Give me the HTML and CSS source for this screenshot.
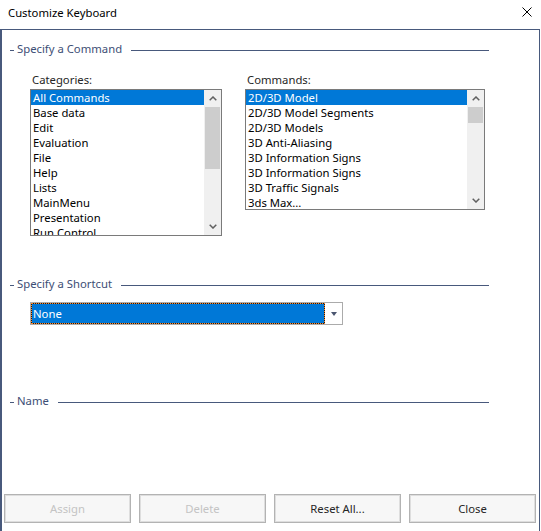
FILE: index.html
```html
<!DOCTYPE html>
<html>
<head>
<meta charset="utf-8">
<link rel="stylesheet" href="styles.css">
</head>
<body>
<div class="titlebar">
  <span class="title">Customize Keyboard</span>
  <svg class="close" width="10" height="10" viewBox="0 0 10 10"><path d="M0.5 0.5 L9.5 9.5 M9.5 0.5 L0.5 9.5" stroke="#000" stroke-width="1" fill="none"/></svg>
</div>
<div class="frame">
  <div class="group-head first"><span class="dash"></span><span class="gtext">Specify a Command</span><span class="gline"></span></div>
  <div class="lists">
    <div class="col">
      <div class="label">Categories:</div>
      <div class="listbox cat">
        <div class="items">
          <div class="item sel">All Commands</div>
          <div class="item">Base data</div>
          <div class="item">Edit</div>
          <div class="item">Evaluation</div>
          <div class="item">File</div>
          <div class="item">Help</div>
          <div class="item">Lists</div>
          <div class="item">MainMenu</div>
          <div class="item">Presentation</div>
          <div class="item">Run Control</div>
        </div>
        <div class="sbar">
          <div class="arrow"><svg width="8" height="5" viewBox="0 0 8 5"><path d="M0.7 4.3 L4 1 L7.3 4.3" stroke="#606060" stroke-width="1.5" fill="none"/></svg></div>
          <div class="track"><div class="thumb cat-thumb"></div></div>
          <div class="arrow"><svg width="8" height="5" viewBox="0 0 8 5"><path d="M0.7 0.7 L4 4 L7.3 0.7" stroke="#606060" stroke-width="1.5" fill="none"/></svg></div>
        </div>
      </div>
    </div>
    <div class="col">
      <div class="label">Commands:</div>
      <div class="listbox cmd">
        <div class="items">
          <div class="item sel">2D/3D Model</div>
          <div class="item">2D/3D Model Segments</div>
          <div class="item">2D/3D Models</div>
          <div class="item">3D Anti-Aliasing</div>
          <div class="item">3D Information Signs</div>
          <div class="item">3D Information Signs</div>
          <div class="item">3D Traffic Signals</div>
          <div class="item">3ds Max...</div>
        </div>
        <div class="sbar">
          <div class="arrow"><svg width="8" height="5" viewBox="0 0 8 5"><path d="M0.7 4.3 L4 1 L7.3 4.3" stroke="#606060" stroke-width="1.5" fill="none"/></svg></div>
          <div class="track"><div class="thumb cmd-thumb"></div></div>
          <div class="arrow"><svg width="8" height="5" viewBox="0 0 8 5"><path d="M0.7 0.7 L4 4 L7.3 0.7" stroke="#606060" stroke-width="1.5" fill="none"/></svg></div>
        </div>
      </div>
    </div>
  </div>
  <div class="group-head shortcut"><span class="dash"></span><span class="gtext">Specify a Shortcut</span><span class="gline"></span></div>
  <div class="combo">
    <div class="combo-value">None</div>
    <div class="combo-btn"><span class="tri"></span></div>
  </div>
  <div class="group-head name"><span class="dash"></span><span class="gtext">Name</span><span class="gline"></span></div>
  <div class="buttons">
    <div class="btn disabled">Assign</div>
    <div class="btn disabled">Delete</div>
    <div class="btn">Reset All...</div>
    <div class="btn">Close</div>
  </div>
</div>
</body>
</html>
```
FILE: styles.css
```css
html, body {
  margin: 0;
  padding: 0;
  background: #ffffff;
}
body {
  width: 541px;
  height: 531px;
  overflow: hidden;
  font-family: "Noto Sans", "Liberation Sans", sans-serif;
  font-size: 11.3px;
  color: #000;
}
.titlebar {
  height: 29px;
  box-sizing: border-box;
  padding: 5px 0 0 8px;
  display: flex;
  align-items: flex-start;
}
.title {
  line-height: 16px;
  color: #000;
}
.close {
  margin-left: auto;
  margin-right: 9px;
  margin-top: 2px;
}
.frame {
  width: 540px;
  height: 502px;
  box-sizing: border-box;
  border-top: 1px solid #48597c;
  border-left: 2px solid #48597c;
  border-right: 1px solid #48597c;
}
.group-head {
  display: flex;
  align-items: center;
  height: 16px;
  margin-left: 8px;
  width: 479px;
}
.group-head.first { margin-top: 11px; }
.group-head.shortcut { margin-top: 40px; }
.group-head.name { margin-top: 68px; }
.dash {
  width: 4px;
  height: 1px;
  background: #48597c;
  margin-top: 3px;
}
.gtext {
  color: #3d4e75;
  margin: 0 9px 0 3px;
  line-height: 16px;
}
.gline {
  flex: 1;
  height: 1px;
  background: #48597c;
  margin-top: 3px;
}
.lists {
  display: flex;
  align-items: flex-start;
  margin-left: 28px;
  gap: 23px;
}
.col {
  display: flex;
  flex-direction: column;
}
.label {
  margin-top: 15px;
  margin-bottom: 2px;
  height: 15px;
  line-height: 15px;
  padding-left: 2px;
  color: #262626;
}
.listbox {
  display: flex;
  border: 1px solid #7a7a7a;
  box-sizing: border-box;
  background: #fff;
  overflow: hidden;
}
.listbox.cat { width: 192px; height: 147px; }
.listbox.cmd { width: 240px; height: 121px; }
.items {
  flex: 1;
  overflow: hidden;
}
.item {
  height: 15px;
  line-height: 15px;
  padding-left: 2px;
  white-space: nowrap;
  color: #000;
}
.item.sel {
  background: #0078d7;
  color: #fff;
}
.sbar {
  width: 17px;
  background: #f0f0f0;
  display: flex;
  flex-direction: column;
}
.arrow {
  height: 17px;
  display: flex;
  align-items: center;
  justify-content: center;
}
.track {
  flex: 1;
  position: relative;
}
.thumb {
  margin: 0 1px;
  background: #cdcdcd;
}
.cat-thumb { height: 62px; }
.cmd-thumb { height: 16px; }
.combo {
  margin-top: 10px;
  margin-left: 28px;
  width: 313px;
  height: 23px;
  box-sizing: border-box;
  border: 1px solid #ababab;
  display: flex;
  background: #fff;
}
.combo-value {
  flex: 1;
  background: #0078d7;
  color: #fff;
  line-height: 21px;
  padding-left: 2px;
  box-shadow: inset 0 0 0 1px #1b1b1b;
  outline: 1px dotted #ff8a2a;
  outline-offset: -1px;
}
.combo-btn {
  width: 17px;
  display: flex;
  align-items: center;
  justify-content: center;
}
.tri {
  width: 0;
  height: 0;
  border-left: 3px solid transparent;
  border-right: 3px solid transparent;
  border-top: 4px solid #4a5670;
  margin-left: 1px;
}
.buttons {
  margin-top: 85px;
  margin-left: 2px;
  display: flex;
  gap: 8px;
}
.btn {
  width: 127px;
  height: 29px;
  box-sizing: border-box;
  border: 1px solid #b3b3b3;
  box-shadow: inset 0 0 0 1px #dedede;
  background: #f7f7f7;
  display: flex;
  align-items: center;
  justify-content: center;
  color: #262626;
}
.btn.disabled {
  color: #c4c4c4;
}
```
